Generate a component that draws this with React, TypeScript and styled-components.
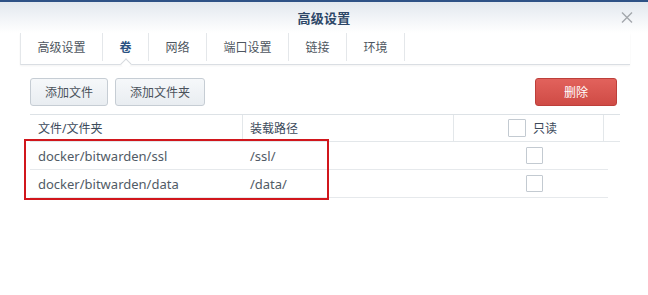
import React from 'react';
import styled, { createGlobalStyle } from 'styled-components';

const GlobalStyle = createGlobalStyle`
  html, body {
    margin: 0;
    padding: 0;
    background: #fff;
  }
  body {
    font-family: "Noto Sans", "Noto Sans CJK SC", sans-serif;
    font-size: 12px;
  }
`;

const tabs = ['高级设置', '卷', '网络', '端口设置', '链接', '环境'];

const rows = [
  { file: 'docker/bitwarden/ssl', mount: '/ssl/' },
  { file: 'docker/bitwarden/data', mount: '/data/' },
];

const CloseIcon = () => (
  <svg width="12" height="11" viewBox="0 0 12 11">
    <path d="M1 0.5 L11 10.5 M11 0.5 L1 10.5" stroke="#a3a7ac" strokeWidth="1.4" fill="none" />
  </svg>
);

const App = () => {
  return (
    <>
      <GlobalStyle />
      <Window>
        <Header>
          <h1>高级设置</h1>
          <CloseBtn type="button">
            <CloseIcon />
          </CloseBtn>
        </Header>

        <TabBar>
          {tabs.map((t) => (
            <Tab key={t} $active={t === '卷'}>{t}</Tab>
          ))}
        </TabBar>

        <Toolbar>
          <div className="left">
            <Btn type="button">添加文件</Btn>
            <Btn type="button">添加文件夹</Btn>
          </div>
          <DangerBtn type="button">删除</DangerBtn>
        </Toolbar>

        <Table>
          <HeadRow>
            <Cell>文件/文件夹</Cell>
            <Cell>装载路径</Cell>
            <Cell $center>
              <Check $size={18} />
              <span className="label">只读</span>
            </Cell>
            <Cell />
          </HeadRow>
          {rows.map((r) => (
            <Row key={r.file}>
              <Cell>{r.file}</Cell>
              <Cell>{r.mount}</Cell>
              <Cell $center>
                <Check $size={17} />
              </Cell>
            </Row>
          ))}
          <Highlight />
        </Table>
      </Window>
    </>
  );
};

const Window = styled.div`
  width: 648px;
  height: 295px;
  box-sizing: border-box;
  border-top: 2px solid #2e5286;
  background: #fff;
  overflow: hidden;
`;

const Header = styled.div`
  position: relative;
  height: 31px;
  display: flex;
  align-items: center;
  justify-content: center;
  background: linear-gradient(to bottom, #e2e8ee 0%, #f4f6f9 60%, #ffffff 100%);

  h1 {
    margin: 0;
    padding-bottom: 1px;
    font-size: 13px;
    font-weight: 700;
    color: #2d4768;
    letter-spacing: 0.3px;
  }
`;

const CloseBtn = styled.button`
  position: absolute;
  right: 15px;
  top: 10px;
  padding: 0;
  border: 0;
  background: none;
  display: flex;
`;

const TabBar = styled.div`
  display: flex;
  height: 31px;
  margin: 0 18px 0 20px;
  border-left: 1px solid #e4e7ea;
  border-bottom: 1px solid #dadee3;
  box-shadow: 0 1px 2px rgba(0, 0, 0, 0.05);
`;

const Tab = styled.div<{ $active?: boolean }>`
  position: relative;
  display: flex;
  align-items: center;
  padding: 0 16.5px;
  border-right: 1px solid #e4e7ea;
  margin-bottom: 3px;
  font-size: 12px;
  color: ${(p) => (p.$active ? '#2a5283' : '#4e5660')};
  font-weight: ${(p) => (p.$active ? 700 : 400)};

  &::after {
    content: '';
    display: ${(p) => (p.$active ? 'block' : 'none')};
    position: absolute;
    left: 50%;
    bottom: -7px;
    width: 7px;
    height: 7px;
    margin-left: -4px;
    background: #fff;
    border-top: 1px solid #d6dade;
    border-left: 1px solid #d6dade;
    transform: rotate(45deg);
  }
`;

const Toolbar = styled.div`
  display: flex;
  justify-content: space-between;
  margin: 13px 31px 0 30px;

  .left {
    display: flex;
    gap: 7px;
  }
`;

const Btn = styled.button`
  height: 28px;
  padding: 0 14px;
  border: 1px solid #c6cdd4;
  border-radius: 3px;
  background: linear-gradient(to bottom, #f6f8fa, #e9edf1);
  font-family: inherit;
  font-size: 12px;
  color: #4a525b;
`;

const DangerBtn = styled(Btn)`
  width: 82px;
  border-color: #bd3f3a;
  background: linear-gradient(to bottom, #e2625c, #cf4b45);
  color: #fff;
`;

const Table = styled.div`
  position: relative;
  margin: 8px 28px 0 30px;
  border-top: 1px solid #dde2e6;
`;

const HeadRow = styled.div`
  display: grid;
  grid-template-columns: 212px 211px 150px 1fr;
  height: 26px;
  border-bottom: 1px solid #e3e7ea;
  color: #3c4a5b;

  & > div + div {
    border-left: 1px solid #e3e7ea;
  }
  & > div:nth-child(2) {
    padding-left: 7px;
  }
  & > div:nth-child(3) {
    padding-left: 8px;
  }
  .label {
    margin-left: 7px;
  }
`;

const Row = styled.div`
  display: grid;
  grid-template-columns: 212px 212px 154px;
  width: 578px;
  height: 27px;
  border-bottom: 1px solid #e6e9ec;
  color: #515b66;

  & > div {
    font-size: 13px;
  }
  & > div:nth-child(3) {
    padding-left: 6px;
  }
`;

const Cell = styled.div<{ $center?: boolean }>`
  display: flex;
  align-items: center;
  justify-content: ${(p) => (p.$center ? 'center' : 'flex-start')};
  padding-left: ${(p) => (p.$center ? '0' : '8px')};
  font-size: 12px;
  white-space: nowrap;
`;

const Check = styled.span<{ $size: number }>`
  display: inline-block;
  box-sizing: border-box;
  width: ${(p) => p.$size}px;
  height: ${(p) => p.$size}px;
  border: 1px solid #c3cad1;
  border-radius: 1px;
  background: #fff;
`;

const Highlight = styled.div`
  position: absolute;
  left: -6px;
  top: 24px;
  width: 305px;
  height: 61px;
  box-sizing: border-box;
  border: 2px solid #d1161c;
  pointer-events: none;
`;

export default App;
